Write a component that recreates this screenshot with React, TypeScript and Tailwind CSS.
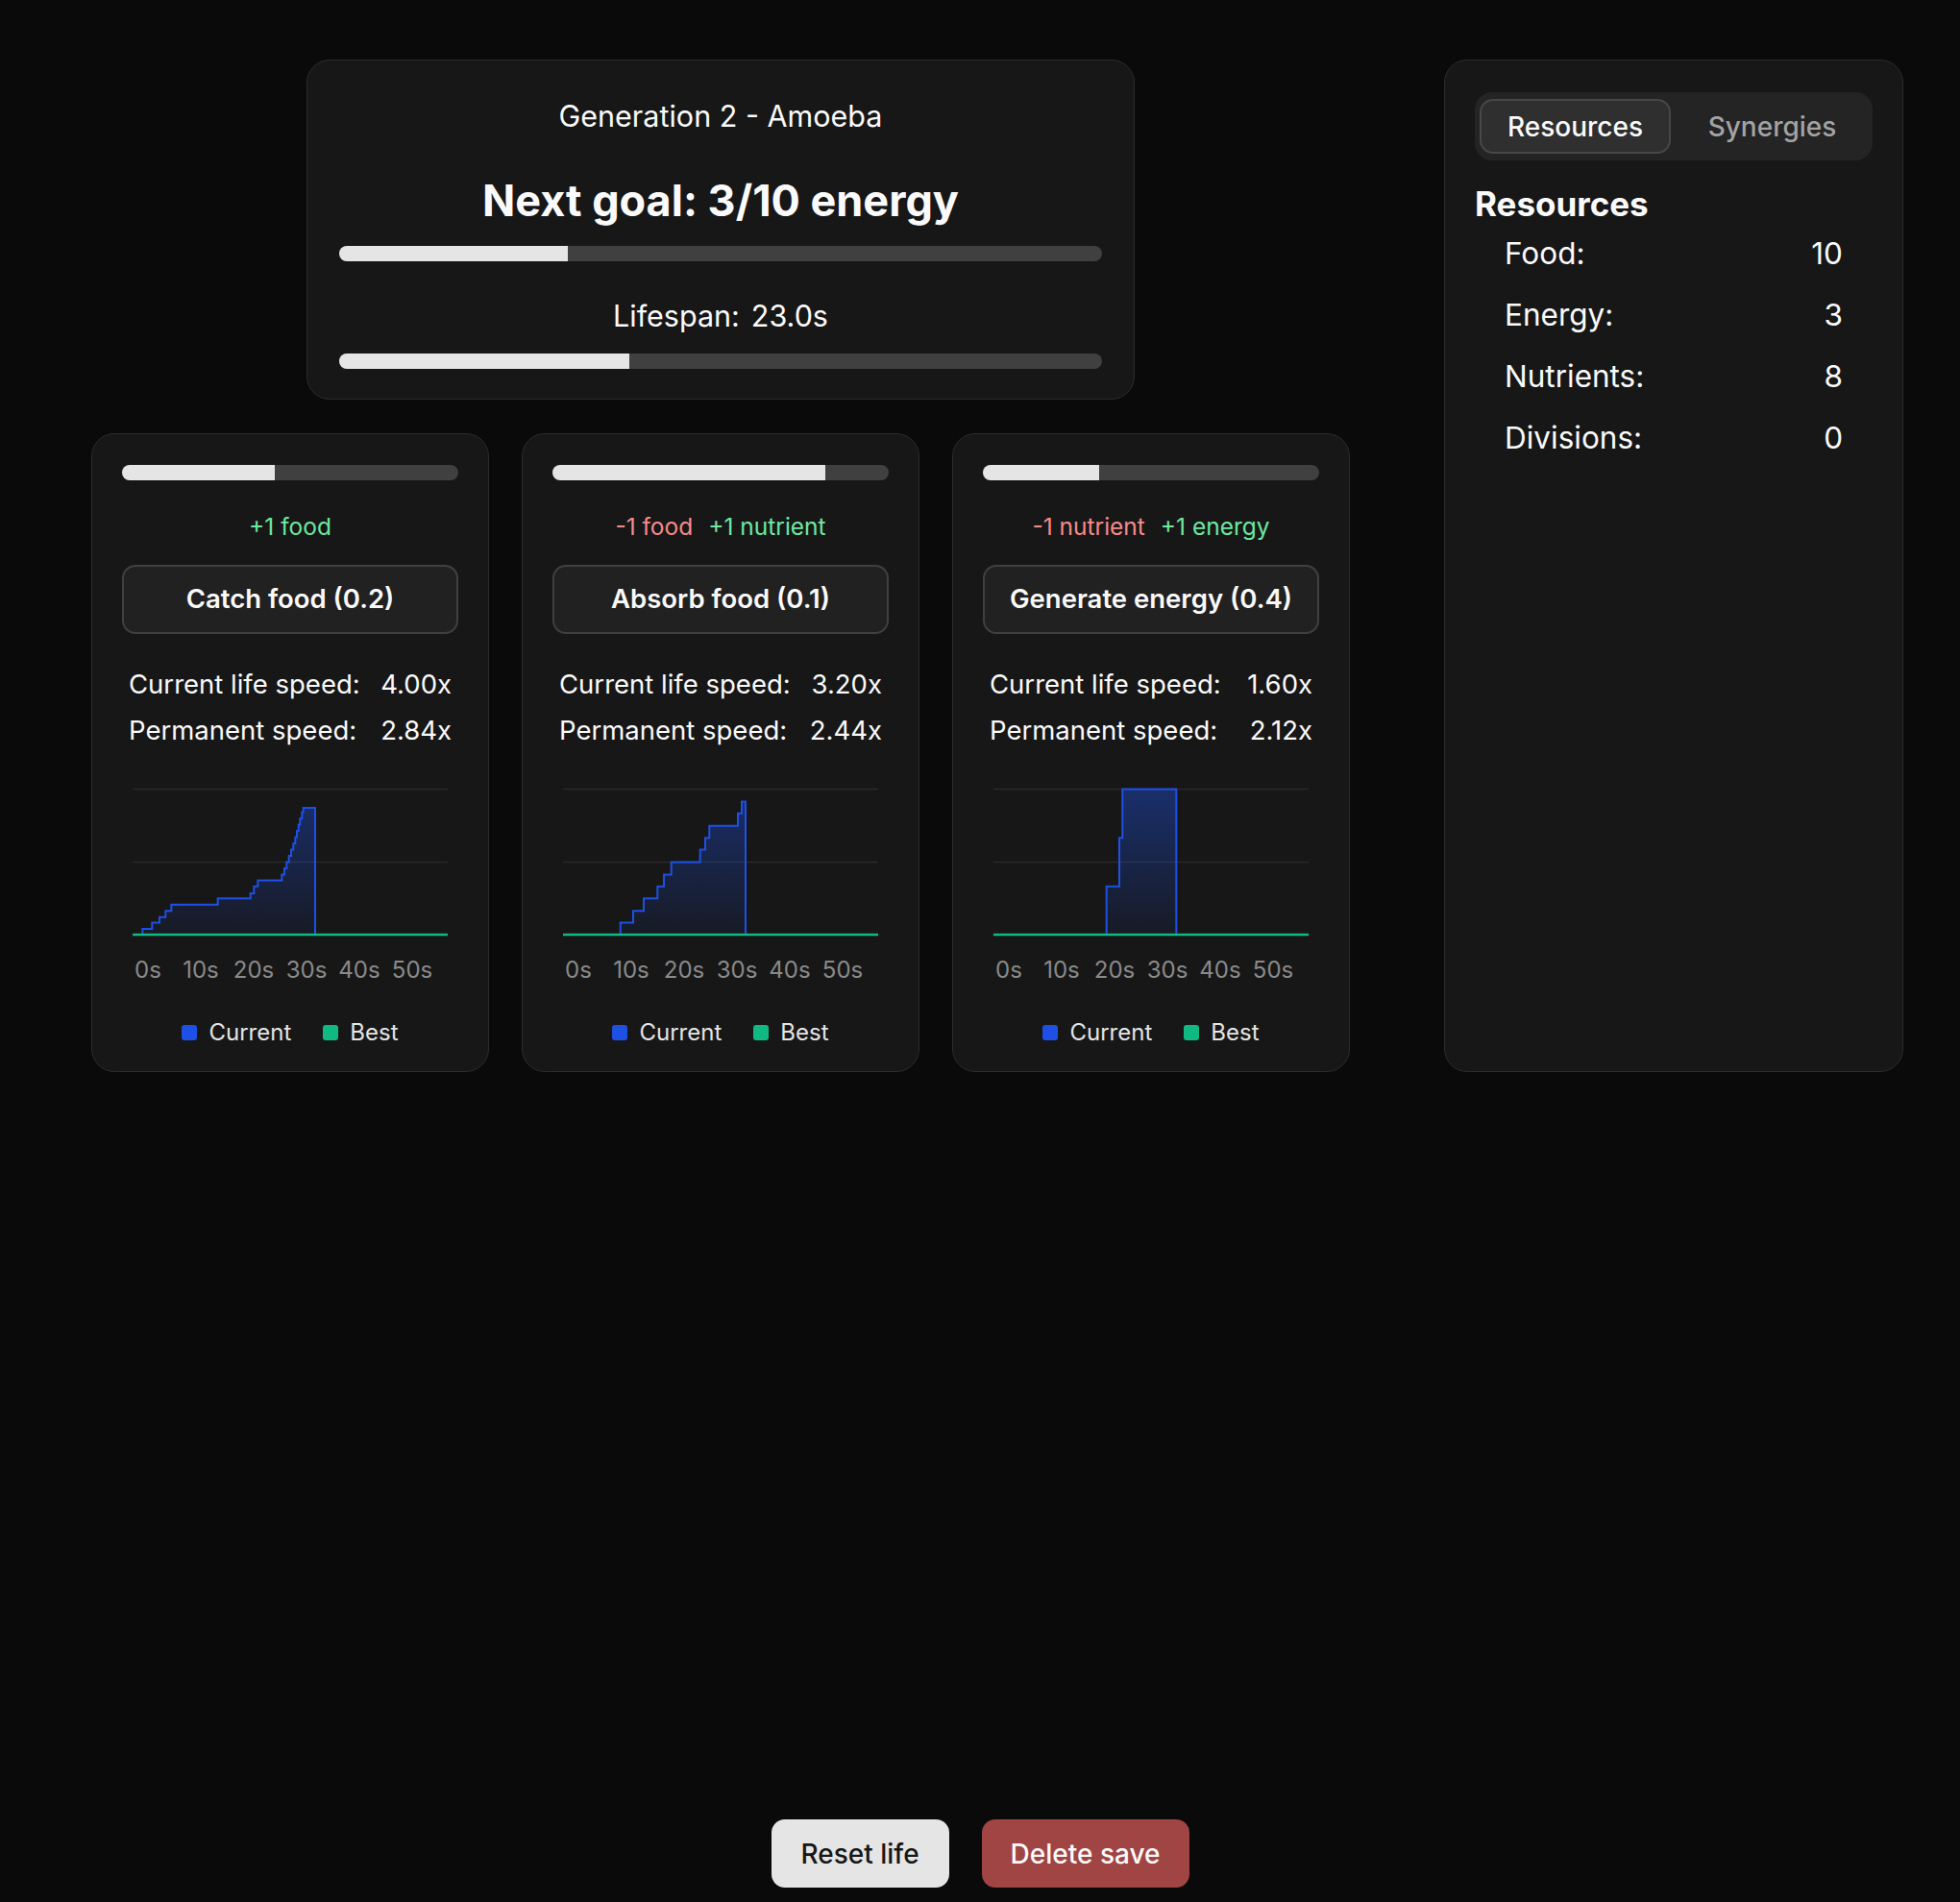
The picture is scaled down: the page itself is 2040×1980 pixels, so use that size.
import { useId } from "react";

type Step = [number, number];

const BASE = 163;

const actions = [
  {
    progress: 45.5,
    effects: [{ text: "+1 food", good: true }],
    label: "Catch food (0.2)",
    current: "4.00x",
    permanent: "2.84x",
    steps: [
      [10.3, 157], [20.3, 150.4], [28, 144.7], [34.3, 138.2], [40.3, 131.7],
      [88.7, 125.2], [122.7, 120], [126.3, 112.7], [130.3, 106.6], [155.3, 100.5],
      [158, 94], [160.3, 87.5], [162.7, 81], [165, 74.5], [167.3, 68],
      [169.3, 61.5], [171, 55], [172.7, 48.5], [174.3, 42], [176.3, 35.5], [177.7, 31],
    ] as Step[],
    end: 190,
  },
  {
    progress: 81,
    effects: [
      { text: "-1 food", good: false },
      { text: "+1 nutrient", good: true },
    ],
    label: "Absorb food (0.1)",
    current: "3.20x",
    permanent: "2.44x",
    steps: [
      [59.7, 150.4], [73, 138.2], [84, 125.2], [98.3, 112.7], [105, 100.5],
      [112.7, 87.5], [142.7, 74.5], [148, 62.3], [152.3, 49.8], [182, 36.8], [186, 24.6],
    ] as Step[],
    end: 190,
  },
  {
    progress: 34.5,
    effects: [
      { text: "-1 nutrient", good: false },
      { text: "+1 energy", good: true },
    ],
    label: "Generate energy (0.4)",
    current: "1.60x",
    permanent: "2.12x",
    steps: [
      [117.7, 112.7], [131, 62.3], [134.3, 11.6],
    ] as Step[],
    end: 190.3,
  },
];

const resources = [
  { name: "Food:", value: 10 },
  { name: "Energy:", value: 3 },
  { name: "Nutrients:", value: 8 },
  { name: "Divisions:", value: 0 },
];

function stepPath(steps: Step[], end: number) {
  let d = `M ${steps[0][0]} ${BASE}`;
  steps.forEach(([, y], i) => {
    const next = i < steps.length - 1 ? steps[i + 1][0] : end;
    d += ` V ${y} H ${next}`;
  });
  return d + ` V ${BASE}`;
}

const ticks = ["0s", "10s", "20s", "30s", "40s", "50s"];

function SpeedChart({ steps, end }: { steps: Step[]; end: number }) {
  const id = useId().replace(/:/g, "");
  const d = stepPath(steps, end);
  return (
    <svg width="328" height="220" viewBox="0 0 328 220" className="mx-auto block">
      <defs>
        <linearGradient id={`fill${id}`} x1="0" y1="11" x2="0" y2="163" gradientUnits="userSpaceOnUse">
          <stop offset="0%" stopColor="#1d4fe0" stopOpacity="0.42" />
          <stop offset="100%" stopColor="#1d4fe0" stopOpacity="0.07" />
        </linearGradient>
      </defs>
      <line x1="0" y1="11.6" x2="328" y2="11.6" stroke="#2a2a2a" strokeWidth="1.5" />
      <line x1="0" y1="87.5" x2="328" y2="87.5" stroke="#2a2a2a" strokeWidth="1.5" />
      <path d={d + " Z"} fill={`url(#fill${id})`} />
      <path d={d} fill="none" stroke="#1f50e6" strokeWidth="2" />
      <line x1="0" y1="163" x2="328" y2="163" stroke="#10b981" strokeWidth="2.5" />
      {ticks.map((t, i) => (
        <text
          key={t}
          x={16 + i * 55}
          y="208"
          textAnchor="middle"
          fill="#8a8a8a"
          fontSize="24"
          fontFamily="Inter, sans-serif"
        >
          {t}
        </text>
      ))}
    </svg>
  );
}

function ActionCard({ a }: { a: (typeof actions)[number] }) {
  return (
    <div className="w-[414px] rounded-[24px] border border-[#2c2c2c] bg-[#171717] px-[31px] pt-[32px] pb-[25px]">
      <div className="h-[16px] w-full rounded-full bg-[#404040] overflow-hidden">
        <div className="h-full bg-[#e5e5e5]" style={{ width: `${a.progress}%` }} />
      </div>
      <div className="mt-[31px] flex h-[34px] items-center justify-center gap-[16px] text-[24.5px]">
        {a.effects.map((e) => (
          <span key={e.text} className={e.good ? "text-[#6ee7a0]" : "text-[#f68b8b]"}>
            {e.text}
          </span>
        ))}
      </div>
      <button className="mt-[23px] flex h-[72px] w-full items-center justify-center rounded-[14px] border-2 border-[#404040] bg-[#212121] text-[27.5px] font-semibold text-[#fafafa]">
        {a.label}
      </button>
      <div className="mt-[28px] px-[7px] text-[27.5px] leading-[48px] text-[#fafafa]">
        <div className="flex justify-between">
          <span>Current life speed:</span>
          <span>{a.current}</span>
        </div>
        <div className="flex justify-between">
          <span>Permanent speed:</span>
          <span>{a.permanent}</span>
        </div>
      </div>
      <div className="mt-[26px]">
        <SpeedChart steps={a.steps} end={a.end} />
      </div>
      <div className="mt-[30px] flex h-[30px] items-center justify-center gap-[33px] text-[24px] text-[#e5e5e5]">
        <div className="flex items-center gap-[12px]">
          <span className="h-[16px] w-[16px] rounded-[3px] bg-[#1f50e6]" />
          <span>Current</span>
        </div>
        <div className="flex items-center gap-[12px]">
          <span className="h-[16px] w-[16px] rounded-[3px] bg-[#10b981]" />
          <span>Best</span>
        </div>
      </div>
    </div>
  );
}

function GoalCard() {
  return (
    <div className="w-[862px] rounded-[24px] border border-[#2c2c2c] bg-[#171717] px-[33px] pt-[38px] pb-[31px] text-center text-[#fafafa]">
      <div className="text-[30.5px] leading-[40px]">Generation 2 - Amoeba</div>
      <div className="mt-[42px] text-[45px] font-bold leading-[52px]">Next goal: 3/10 energy</div>
      <div className="mt-[21px] h-[16px] w-full rounded-full bg-[#404040] overflow-hidden">
        <div className="h-full w-[30%] bg-[#e5e5e5]" />
      </div>
      <div className="mt-[37px] flex items-center justify-center gap-[12px] text-[30.5px] leading-[40px]">
        <span>Lifespan:</span>
        <span>23.0s</span>
      </div>
      <div className="mt-[19px] h-[16px] w-full rounded-full bg-[#404040] overflow-hidden">
        <div className="h-full w-[38%] bg-[#e5e5e5]" />
      </div>
    </div>
  );
}

function Sidebar() {
  return (
    <aside className="w-[478px] rounded-[24px] border border-[#2c2c2c] bg-[#171717] px-[31px] pt-[33px] text-[#fafafa]">
      <div className="grid h-[71px] grid-cols-2 gap-[6px] rounded-[18px] bg-[#242424] px-[5px] py-[7px] text-[28px] font-medium">
        <div className="flex items-center justify-center rounded-[14px] border-2 border-[#474747] bg-[#2f2f2f]">
          Resources
        </div>
        <div className="flex items-center justify-center text-[#a3a3a3]">Synergies</div>
      </div>
      <h2 className="mt-[25px] text-[35px] font-bold leading-[40px]">Resources</h2>
      <div className="text-[31.5px]">
        {resources.map((r) => (
          <div key={r.name} className="flex h-[64px] items-center justify-between px-[31px]">
            <span>{r.name}</span>
            <span>{r.value}</span>
          </div>
        ))}
      </div>
    </aside>
  );
}

export default function App() {
  return (
    <div className="flex min-h-screen flex-col bg-[#0a0a0a] font-['Inter',sans-serif]">
      <div className="flex gap-[98px] pt-[62px] pl-[95px]">
        <main className="flex w-[1310px] flex-col items-center gap-[35px]">
          <GoalCard />
          <div className="flex gap-[34px]">
            {actions.map((a) => (
              <ActionCard key={a.label} a={a} />
            ))}
          </div>
        </main>
        <Sidebar />
      </div>
      <div className="mt-auto flex justify-center gap-[34px] pb-[15px]">
        <button className="h-[71px] w-[185px] rounded-[14px] bg-[#e5e5e5] text-[28px] font-medium text-[#171717]">
          Reset life
        </button>
        <button className="h-[71px] w-[216px] rounded-[14px] bg-[#a04444] text-[28px] font-medium text-[#fafafa]">
          Delete save
        </button>
      </div>
    </div>
  );
}
